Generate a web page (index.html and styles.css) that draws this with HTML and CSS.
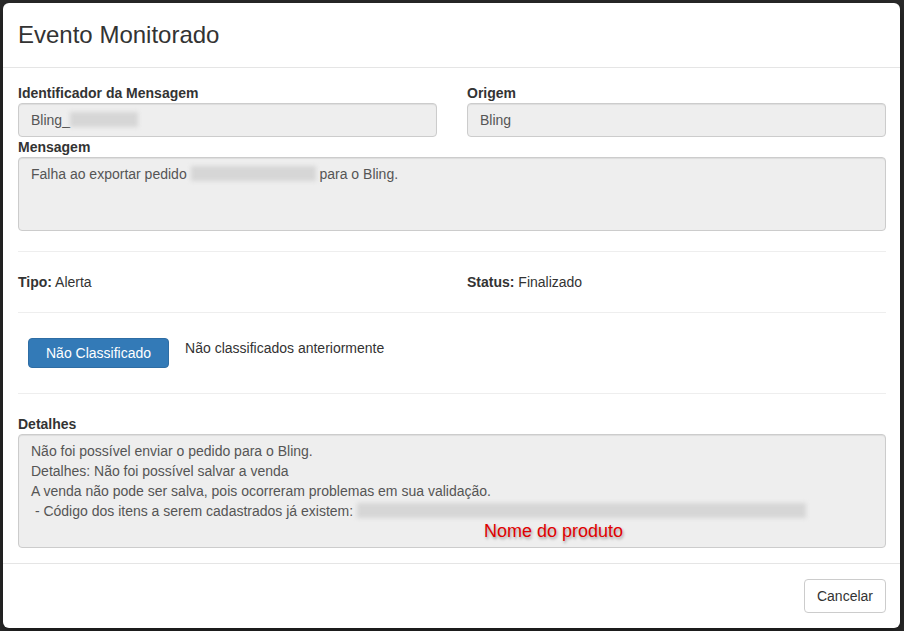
FILE: index.html
```html
<!DOCTYPE html>
<html lang="pt-BR">
<head>
    <meta charset="UTF-8">
    <meta name="viewport" content="width=device-width, initial-scale=1.0">
    <title>Evento Monitorado</title>

    <!-- CSS -->
    <link rel="stylesheet" href="styles.css">
</head>
<body>

    <!-- Modal -->
    <div class="modal">
        <div class="modal-header">
            <h4 class="modal-title">Evento Monitorado</h4>
        </div>

        <div class="modal-body">
            <div class="row">
                <div class="col">
                    <label class="field-label">Identificador da Mensagem</label>
                    <div class="form-control">Bling_<span class="blur blur-id"></span></div>
                </div>
                <div class="col">
                    <label class="field-label">Origem</label>
                    <div class="form-control">Bling</div>
                </div>
            </div>

            <label class="field-label">Mensagem</label>
            <div class="form-control textarea msg-area">Falha ao exportar pedido <span class="blur blur-pedido"></span> para o Bling.</div>

            <hr>

            <div class="row">
                <div class="col"><strong>Tipo:</strong> Alerta</div>
                <div class="col"><strong>Status:</strong> Finalizado</div>
            </div>

            <hr>

            <div class="classificacao">
                <button class="btn btn-primary">Não Classificado</button>
                <span class="classificacao-text">Não classificados anteriormente</span>
            </div>

            <hr>

            <label class="field-label">Detalhes</label>
            <div class="form-control textarea details-area">
                <div>Não foi possível enviar o pedido para o Bling.</div>
                <div>Detalhes: Não foi possível salvar a venda</div>
                <div>A venda não pode ser salva, pois ocorreram problemas em sua validação.</div>
                <div>&nbsp;- Código dos itens a serem cadastrados já existem: <span class="blur blur-itens"></span></div>
                <span class="annotation">Nome do produto</span>
            </div>
        </div>

        <div class="modal-footer">
            <button class="btn btn-default">Cancelar</button>
        </div>
    </div>

</body>
</html>
```

FILE: styles.css
```css
/* General styles */
body {
    font-family: "Liberation Sans", Arial, sans-serif;
    font-size: 14px;
    line-height: 20px;
    color: #333;
    margin: 0;
    padding: 3px 4px 3px 3px;
    background-color: #2b2b2b;
}

/* Modal */
.modal {
    width: 897px;
    background-color: #fff;
    border-radius: 6px;
    box-shadow: 0 5px 15px rgba(0, 0, 0, 0.5);
}

.modal-header {
    padding: 15px;
    border-bottom: 1px solid #e5e5e5;
}

.modal-title {
    margin: 0;
    font-size: 24px;
    line-height: 34px;
    font-weight: normal;
}

.modal-body {
    padding: 15px 14px 15px 15px;
}

.modal-footer {
    padding: 15px 14px 15px 15px;
    border-top: 1px solid #e5e5e5;
    display: flex;
    justify-content: flex-end;
}

/* Grid */
.row {
    display: grid;
    grid-template-columns: 1fr 1fr;
    column-gap: 30px;
}

/* Forms */
.field-label {
    display: block;
    font-weight: bold;
}

.form-control {
    box-sizing: border-box;
    height: 34px;
    padding: 6px 12px;
    color: #555;
    background-color: #eee;
    border: 1px solid #ccc;
    border-radius: 4px;
    box-shadow: inset 0 1px 1px rgba(0, 0, 0, 0.075);
    white-space: nowrap;
}

.textarea {
    position: relative;
    white-space: normal;
}

.msg-area {
    height: 74px;
}

.details-area {
    height: 114px;
}

hr {
    margin: 20px 0;
    border: 0;
    border-top: 1px solid #eee;
}

/* Blurred data */
.blur {
    display: inline-block;
    height: 15px;
    vertical-align: -2px;
    background-color: #d6d6d6;
    filter: blur(2px);
}

.blur-id {
    width: 68px;
}

.blur-pedido {
    width: 125px;
}

.blur-itens {
    width: 449px;
}

.annotation {
    position: absolute;
    left: 465px;
    top: 86px;
    font-size: 18px;
    line-height: 20px;
    color: #e00000;
    text-shadow: 1px 2px 3px rgba(0, 0, 0, 0.35);
}

/* Classificacao */
.classificacao {
    display: flex;
    align-items: flex-start;
    gap: 16px;
    padding: 5px 10px;
}

.classificacao-text {
    line-height: 20px;
}

/* Buttons */
.btn {
    font-family: "Liberation Sans", Arial, sans-serif;
    font-size: 14px;
    line-height: 20px;
    border-radius: 4px;
    cursor: pointer;
}

.btn-primary {
    height: 30px;
    padding: 4px 17px;
    color: #fff;
    background-color: #337ab7;
    border: 1px solid #2e6da4;
}

.btn-default {
    height: 34px;
    padding: 6px 12px;
    color: #333;
    background-color: #fff;
    border: 1px solid #ccc;
}
```
